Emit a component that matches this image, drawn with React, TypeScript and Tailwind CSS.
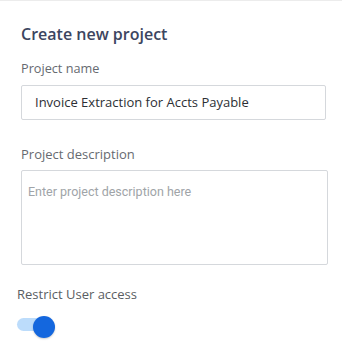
import React from "react";

export default function App() {
  return (
    <div className="w-[342px] h-[353px] bg-white border-t border-[#ececec] overflow-hidden" style={{ fontFamily: '"Open Sans", sans-serif' }}>
      <div className="pl-[21px] pr-[14px] pt-[21px]">
        <h1 className="text-[16px] leading-[24px] font-semibold text-[#3c4560]">Create new project</h1>
        <label className="block mt-[13px] text-[12.7px] leading-[18px] text-[#666a70]">Project name</label>
        <div className="mt-[8px] w-[305px] h-[35px] border border-[#d5d8dc] rounded-[2px] flex items-center pl-[13px]">
          <span className="text-[13px] font-medium text-[#2c2f34]">Invoice Extraction for Accts Payable</span>
        </div>
        <label className="block mt-[25px] text-[13px] leading-[18px] text-[#666a70]">Project description</label>
        <div className="mt-[7px] w-[307px] h-[95px] border border-[#d5d8dc] rounded-[2px] px-[6px] pt-[7px]">
          <span className="text-[12.5px] text-[#a0a4a8]" style={{ fontFamily: 'Roboto, sans-serif' }}>Enter project description here</span>
        </div>
      </div>
      <div className="pl-[17px] mt-[20px]">
        <div className="text-[13px] leading-[18px] text-[#5a5e63]">Restrict User access</div>
        <div className="relative mt-[13px] w-[39px] h-[23px]">
          <div className="absolute left-0 top-[2px] w-[34px] h-[13px] rounded-full bg-[#bcdcfb]" />
          <div className="absolute left-[16px] top-0 w-[22px] h-[22px] rounded-full bg-[#1467de] shadow-[0_1px_2px_rgba(0,0,0,0.2)]" />
        </div>
      </div>
    </div>
  );
}
